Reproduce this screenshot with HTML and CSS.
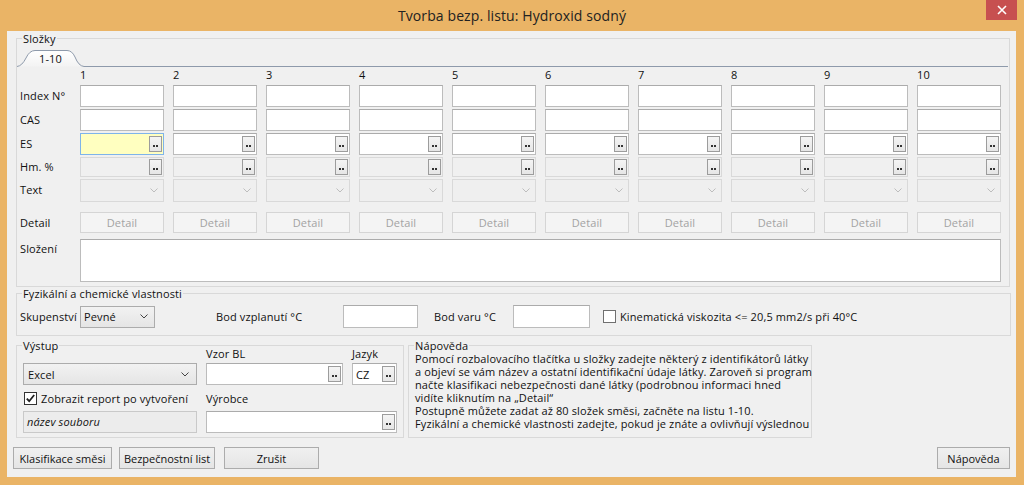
FILE: index.html
```html
<!DOCTYPE html>
<html lang="cs">
<head>
<meta charset="utf-8">
<title>Tvorba bezp. listu</title>
<link rel="stylesheet" href="styles.css">
</head>
<body>
<div class="window">
  <div class="titlebar">
    <span class="title">Tvorba bezp. listu: Hydroxid sodný</span>
    <div class="close"><svg width="10" height="10" viewBox="0 0 10 10"><path d="M1 1L9 9M9 1L1 9" stroke="#fff" stroke-width="1.6"/></svg></div>
  </div>
  <div class="client">
    <div class="group g-slozky">
      <span class="cap">Složky</span>
      <div class="tabstrip">
        <div class="tab">
          <svg class="tab-shape" width="67" height="18" viewBox="0 0 67 18"><defs><linearGradient id="tg" x1="0" y1="0" x2="0" y2="1"><stop offset="0" stop-color="#FFFFFF"/><stop offset="1" stop-color="#F3F3F3"/></linearGradient></defs><path d="M0 17.5 Q5 17 9 9 Q12.5 1.5 18 1.5 H50 Q55 1.5 58 8 Q61.5 17 67 17.5" fill="url(#tg)" stroke="#8E9AAB"/></svg>
          <span class="tab-text">1-10</span>
        </div>
        <div class="tabline"></div>
      </div>
      <div class="grid">
        <div></div>
        <div class="num">1</div><div class="num">2</div><div class="num">3</div><div class="num">4</div><div class="num">5</div><div class="num">6</div><div class="num">7</div><div class="num">8</div><div class="num">9</div><div class="num">10</div>

        <div class="lbl">Index N°</div>
        <div class="tb"></div><div class="tb"></div><div class="tb"></div><div class="tb"></div><div class="tb"></div><div class="tb"></div><div class="tb"></div><div class="tb"></div><div class="tb"></div><div class="tb"></div>

        <div class="lbl">CAS</div>
        <div class="tb"></div><div class="tb"></div><div class="tb"></div><div class="tb"></div><div class="tb"></div><div class="tb"></div><div class="tb"></div><div class="tb"></div><div class="tb"></div><div class="tb"></div>

        <div class="lbl">ES</div>
        <div class="tb withbtn focus"><span class="dots"></span></div>
        <div class="tb withbtn"><span class="dots"></span></div>
        <div class="tb withbtn"><span class="dots"></span></div>
        <div class="tb withbtn"><span class="dots"></span></div>
        <div class="tb withbtn"><span class="dots"></span></div>
        <div class="tb withbtn"><span class="dots"></span></div>
        <div class="tb withbtn"><span class="dots"></span></div>
        <div class="tb withbtn"><span class="dots"></span></div>
        <div class="tb withbtn"><span class="dots"></span></div>
        <div class="tb withbtn"><span class="dots"></span></div>

        <div class="lbl lbl-short">Hm. %</div>
        <div class="tb withbtn dis short"><span class="dots"></span></div>
        <div class="tb withbtn dis short"><span class="dots"></span></div>
        <div class="tb withbtn dis short"><span class="dots"></span></div>
        <div class="tb withbtn dis short"><span class="dots"></span></div>
        <div class="tb withbtn dis short"><span class="dots"></span></div>
        <div class="tb withbtn dis short"><span class="dots"></span></div>
        <div class="tb withbtn dis short"><span class="dots"></span></div>
        <div class="tb withbtn dis short"><span class="dots"></span></div>
        <div class="tb withbtn dis short"><span class="dots"></span></div>
        <div class="tb withbtn dis short"><span class="dots"></span></div>

        <div class="lbl">Text</div>
        <div class="cb-dis"><svg width="8" height="5" viewBox="0 0 8 5"><path d="M0.5 0.5L4 4L7.5 0.5" fill="none" stroke="#BDBDBD"/></svg></div>
        <div class="cb-dis"><svg width="8" height="5" viewBox="0 0 8 5"><path d="M0.5 0.5L4 4L7.5 0.5" fill="none" stroke="#BDBDBD"/></svg></div>
        <div class="cb-dis"><svg width="8" height="5" viewBox="0 0 8 5"><path d="M0.5 0.5L4 4L7.5 0.5" fill="none" stroke="#BDBDBD"/></svg></div>
        <div class="cb-dis"><svg width="8" height="5" viewBox="0 0 8 5"><path d="M0.5 0.5L4 4L7.5 0.5" fill="none" stroke="#BDBDBD"/></svg></div>
        <div class="cb-dis"><svg width="8" height="5" viewBox="0 0 8 5"><path d="M0.5 0.5L4 4L7.5 0.5" fill="none" stroke="#BDBDBD"/></svg></div>
        <div class="cb-dis"><svg width="8" height="5" viewBox="0 0 8 5"><path d="M0.5 0.5L4 4L7.5 0.5" fill="none" stroke="#BDBDBD"/></svg></div>
        <div class="cb-dis"><svg width="8" height="5" viewBox="0 0 8 5"><path d="M0.5 0.5L4 4L7.5 0.5" fill="none" stroke="#BDBDBD"/></svg></div>
        <div class="cb-dis"><svg width="8" height="5" viewBox="0 0 8 5"><path d="M0.5 0.5L4 4L7.5 0.5" fill="none" stroke="#BDBDBD"/></svg></div>
        <div class="cb-dis"><svg width="8" height="5" viewBox="0 0 8 5"><path d="M0.5 0.5L4 4L7.5 0.5" fill="none" stroke="#BDBDBD"/></svg></div>
        <div class="cb-dis"><svg width="8" height="5" viewBox="0 0 8 5"><path d="M0.5 0.5L4 4L7.5 0.5" fill="none" stroke="#BDBDBD"/></svg></div>

        <div class="lbl lbl-detail">Detail</div>
        <div class="dbtn">Detail</div><div class="dbtn">Detail</div><div class="dbtn">Detail</div><div class="dbtn">Detail</div><div class="dbtn">Detail</div><div class="dbtn">Detail</div><div class="dbtn">Detail</div><div class="dbtn">Detail</div><div class="dbtn">Detail</div><div class="dbtn">Detail</div>

        <div class="lbl lbl-top">Složení</div>
        <div class="textarea"></div>
      </div>
    </div>

    <div class="group g-fyz">
      <span class="cap">Fyzikální a chemické vlastnosti</span>
      <div class="fyz-row">
        <span class="f-lbl1">Skupenství</span>
        <div class="combo combo-pevne"><span>Pevné</span><svg width="8" height="5" viewBox="0 0 8 5"><path d="M0.5 0.5L4 4L7.5 0.5" fill="none" stroke="#444"/></svg></div>
        <span class="f-lbl2">Bod vzplanutí °C</span>
        <div class="tb f-in1"></div>
        <span class="f-lbl3">Bod varu °C</span>
        <div class="tb f-in2"></div>
        <span class="chk"></span>
        <span class="chk-text">Kinematická viskozita &lt;= 20,5 mm2/s při 40°C</span>
      </div>
    </div>

    <div class="bottom">
      <div class="group g-vystup">
        <span class="cap">Výstup</span>
        <div class="vgrid">
          <div></div>
          <div class="vlbl">Vzor BL</div>
          <div class="vlbl">Jazyk</div>

          <div class="combo combo-excel"><span>Excel</span><svg width="8" height="5" viewBox="0 0 8 5"><path d="M0.5 0.5L4 4L7.5 0.5" fill="none" stroke="#444"/></svg></div>
          <div class="tb withbtn"><span class="dots"></span></div>
          <div class="tb withbtn cz"><span class="cz-text">CZ</span><span class="dots"></span></div>

          <label class="chkline"><span class="chk checked"><svg width="11" height="11" viewBox="0 0 11 11"><path d="M1.8 5.6L4.2 8.2L9.2 2" fill="none" stroke="#1E1E1E" stroke-width="1.8"/></svg></span><span>Zobrazit report po vytvoření</span></label>
          <div class="vlbl vlbl-mid">Výrobce</div>
          <div></div>

          <div class="tb fname">název souboru</div>
          <div class="tb withbtn span2"><span class="dots"></span></div>
        </div>
      </div>
      <div class="group g-help">
        <span class="cap">Nápověda</span>
        <p class="help">Pomocí rozbalovacího tlačítka u složky zadejte některý z identifikátorů látky<br>a objeví se vám název a ostatní identifikační údaje látky. Zaroveň si program<br>načte klasifikaci nebezpečnosti dané látky (podrobnou informaci hned<br>vidíte kliknutím na „Detail“<br>Postupně můžete zadat až 80 složek směsi, začněte na listu 1-10.<br>Fyzikální a chemické vlastnosti zadejte, pokud je znáte a ovlivňují výslednou</p>
      </div>
    </div>

    <div class="buttons">
      <button class="btn b-klas">Klasifikace směsi</button>
      <button class="btn b-bezp">Bezpečnostní list</button>
      <button class="btn b-zrus">Zrušit</button>
      <span class="spacer"></span>
      <button class="btn b-help">Nápověda</button>
    </div>
  </div>
</div>
</body>
</html>
```

FILE: styles.css
```css
* { box-sizing: border-box; }
html, body { margin: 0; padding: 0; }
body {
  width: 1024px;
  height: 485px;
  overflow: hidden;
  background: #EAB466;
  font-family: "Open Sans", "Noto Sans", sans-serif;
  font-size: 11px;
  letter-spacing: 0.12px;
  color: #111;
}
.window {
  width: 1024px;
  height: 485px;
  background: #EAB466;
  display: flex;
  flex-direction: column;
}
.titlebar {
  position: relative;
  height: 31px;
  flex: none;
  display: flex;
  align-items: center;
  justify-content: center;
}
.title {
  font-size: 14px;
  letter-spacing: 0.1px;
  color: #222;
  margin-top: -1px;
}
.close {
  position: absolute;
  top: 0;
  right: 7px;
  width: 31px;
  height: 20px;
  background: #C75050;
  display: flex;
  align-items: center;
  justify-content: center;
}
.client {
  margin-left: 7px;
  width: 1009px;
  height: 446px;
  background: #F0F0F0;
  display: flex;
  flex-direction: column;
}
.group {
  position: relative;
  border: 1px solid #D9D9D9;
  flex: none;
}
.cap {
  position: absolute;
  left: 5px;
  top: -7px;
  padding: 0 1px;
  background: #F0F0F0;
  line-height: 13px;
  white-space: nowrap;
}

/* Složky */
.g-slozky {
  margin: 7px 0 0 9px;
  width: 994px;
  height: 249px;
}
.tabstrip {
  margin-top: 10px;
  height: 18px;
  display: flex;
  margin-right: 1px;
}
.tab {
  position: relative;
  width: 67px;
  height: 18px;
  display: flex;
  align-items: center;
  justify-content: center;
}
.tab-shape { position: absolute; left: 0; top: 0; }
.tab-text { position: relative; padding-top: 1px; }
.tabline {
  flex: 1;
  border-bottom: 1px solid #8E9AAB;
}
.grid {
  display: grid;
  grid-template-columns: 51px repeat(10, 84px);
  column-gap: 9px;
  grid-template-rows: 18px 24px 24px 24px 22px 33px 27px 42px;
  margin-left: 3px;
  align-items: start;
}
.num { line-height: 15px; }
.lbl { line-height: 22px; white-space: nowrap; }
.lbl-short { line-height: 20px; }
.lbl-detail { line-height: 21px; }
.lbl-top { line-height: 15px; padding-top: 2px; }
.tb {
  height: 22px;
  background: #fff;
  border: 1px solid #BCBCBC;
  border-top-color: #ABABAB;
}
.withbtn {
  display: flex;
  align-items: center;
  justify-content: flex-end;
  padding-right: 1px;
}
.tb.focus {
  background: #FFFFC0;
  border-color: #7EB4EA;
}
.tb.dis {
  background: #F0F0F0;
  border-color: #D9D9D9;
}
.tb.short { height: 20px; }
.dots {
  width: 13px;
  height: 16px;
  border: 1px solid #9C9C9C;
  background: linear-gradient(#F4F4F4, #E6E6E6);
  display: flex;
  align-items: flex-end;
  justify-content: center;
  padding-bottom: 4px;
  padding-right: 3px;
  flex: none;
}
.dots::before {
  content: "";
  width: 2px;
  height: 2px;
  background: #333;
  box-shadow: 3px 0 #333;
}
.cb-dis {
  height: 23px;
  background: #EFEFEF;
  border: 1px solid #D9D9D9;
  display: flex;
  align-items: center;
  justify-content: flex-end;
  padding-right: 5px;
}
.dbtn {
  height: 21px;
  border: 1px solid #D5D5D5;
  background: #F4F4F4;
  color: #A3A3A3;
  display: flex;
  align-items: center;
  justify-content: center;
}
.textarea {
  grid-column: 2 / -1;
  height: 43px;
  background: #fff;
  border: 1px solid #BCBCBC;
  border-top-color: #ABABAB;
}

/* Fyzikální */
.g-fyz {
  margin: 6px 0 0 9px;
  width: 995px;
  height: 43px;
}
.fyz-row {
  margin-top: 11px;
  height: 23px;
  padding-left: 3px;
  display: flex;
  align-items: center;
  white-space: nowrap;
}
.f-lbl1 { width: 60px; }
.combo {
  height: 22px;
  border: 1px solid #ACACAC;
  background: linear-gradient(#F2F2F2, #E5E5E5);
  display: flex;
  align-items: center;
  justify-content: space-between;
  padding: 0 6px 0 3px;
}
.combo-pevne { width: 75px; }
.f-lbl2 { margin-left: 61px; width: 127px; }
.f-in1 { width: 75px; height: 23px; }
.f-lbl3 { margin-left: 16px; width: 79px; }
.f-in2 { width: 77px; height: 23px; }
.chk {
  width: 13px;
  height: 13px;
  border: 1px solid #707070;
  background: #fff;
  flex: none;
  display: flex;
  align-items: center;
  justify-content: center;
}
.fyz-row .chk { margin-left: 13px; }
.chk-text { margin-left: 4px; }

/* bottom */
.bottom {
  display: flex;
  margin: 9px 0 0 9px;
  gap: 4px;
}
.g-vystup { width: 388px; height: 93px; }
.vgrid {
  display: grid;
  grid-template-columns: 174px 137px 45px;
  column-gap: 9px;
  grid-template-rows: 17px 22px 26px 22px;
  padding-left: 6px;
  align-items: start;
}
.vlbl { line-height: 15px; }
.vlbl-mid { align-self: center; }
.combo-excel { padding-left: 4px; padding-right: 7px; }
.cz { justify-content: space-between; padding-left: 3px; }
.chkline {
  align-self: center;
  display: flex;
  align-items: center;
  gap: 4px;
  padding-left: 1px;
  white-space: nowrap;
}
.chk.checked { border-color: #333; }
.fname {
  background: #ECECEC;
  border-color: #C9C9C9;
  font-style: italic;
  padding-left: 3px;
  line-height: 20px;
}
.span2 { grid-column: 2 / 4; }
.g-help { width: 404px; height: 93px; }
.help {
  margin: 0;
  padding: 6px 2px 0 6px;
  line-height: 13px;
  white-space: nowrap;
}

/* buttons */
.buttons {
  display: flex;
  margin-top: 9px;
  padding-left: 6px;
  padding-right: 6px;
  height: 22px;
}
.btn {
  height: 22px;
  padding: 0;
  border: 1px solid #ACACAC;
  background: linear-gradient(#F0F0F0, #E5E5E5);
  font: inherit;
  color: #111;
}
.b-klas { width: 99px; }
.b-bezp { width: 96px; margin-left: 7px; }
.b-zrus { width: 95px; margin-left: 9px; }
.spacer { flex: 1; }
.b-help { width: 73px; }
```
